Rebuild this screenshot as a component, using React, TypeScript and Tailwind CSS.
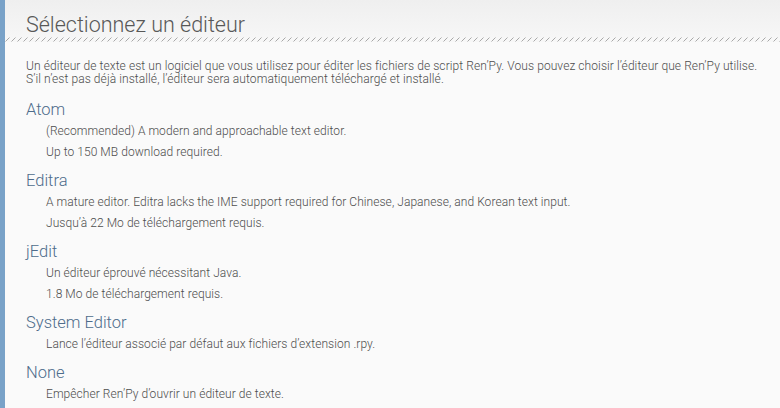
import React from "react";

const editors = [
  {
    name: "Atom",
    lines: [
      "(Recommended) A modern and approachable text editor.",
      "Up to 150 MB download required.",
    ],
  },
  {
    name: "Editra",
    lines: [
      "A mature editor. Editra lacks the IME support required for Chinese, Japanese, and Korean text input.",
      "Jusqu’à 22 Mo de téléchargement requis.",
    ],
  },
  {
    name: "jEdit",
    lines: [
      "Un éditeur éprouvé nécessitant Java.",
      "1.8 Mo de téléchargement requis.",
    ],
  },
  {
    name: "System Editor",
    lines: ["Lance l’éditeur associé par défaut aux fichiers d’extension .rpy."],
  },
  {
    name: "None",
    lines: ["Empêcher Ren’Py d’ouvrir un éditeur de texte."],
  },
];

const Hatch = () => (
  <svg className="block w-full h-[5px]" aria-hidden>
    <defs>
      <pattern id="hatch" width="6" height="5" patternUnits="userSpaceOnUse">
        <path d="M0.5 4.5 L4.5 0.5" stroke="#a8a8a8" strokeWidth="1" />
      </pattern>
    </defs>
    <rect width="100%" height="5" fill="url(#hatch)" />
  </svg>
);

export default function App() {
  return (
    <div
      className="flex w-[780px] h-[408px] overflow-hidden bg-[#fafafa] text-[#555]"
      style={{ fontFamily: "Roboto, 'Liberation Sans', sans-serif" }}
    >
      <div className="w-[5px] shrink-0 bg-[#79a2c8]" />
      <div className="flex-1 flex flex-col">
        <div className="bg-gradient-to-b from-[#efefef] to-[#f6f6f6] pt-[12px]">
          <h1 className="pl-[21px] text-[21.5px] leading-[25px] font-light text-[#585858]">
            Sélectionnez un éditeur
          </h1>
        </div>
        <div className="bg-[#f7f7f7]">
          <Hatch />
        </div>
        <div className="pl-[21px] pr-2">
          <p className="mt-[18px] text-[12px] leading-[13px] font-light tracking-[0.08px] text-[#4d4d4d]">
            Un éditeur de texte est un logiciel que vous utilisez pour éditer les fichiers de script Ren’Py. Vous pouvez choisir l’éditeur que Ren’Py utilise.
            <br />
            S’il n’est pas déjà installé, l’éditeur sera automatiquement téléchargé et installé.
          </p>
          <div className="mt-[12px] flex flex-col gap-[6px]">
            {editors.map((e) => (
              <div key={e.name}>
                <div className="text-[16.5px] leading-[23px] font-light text-[#4e6c8b]">
                  {e.name}
                </div>
                {e.lines.map((l) => (
                  <div
                    key={l}
                    className="pl-[20px] text-[12px] leading-[21px] font-light tracking-[0.06px] text-[#4d4d4d]"
                  >
                    {l}
                  </div>
                ))}
              </div>
            ))}
          </div>
        </div>
      </div>
    </div>
  );
}
